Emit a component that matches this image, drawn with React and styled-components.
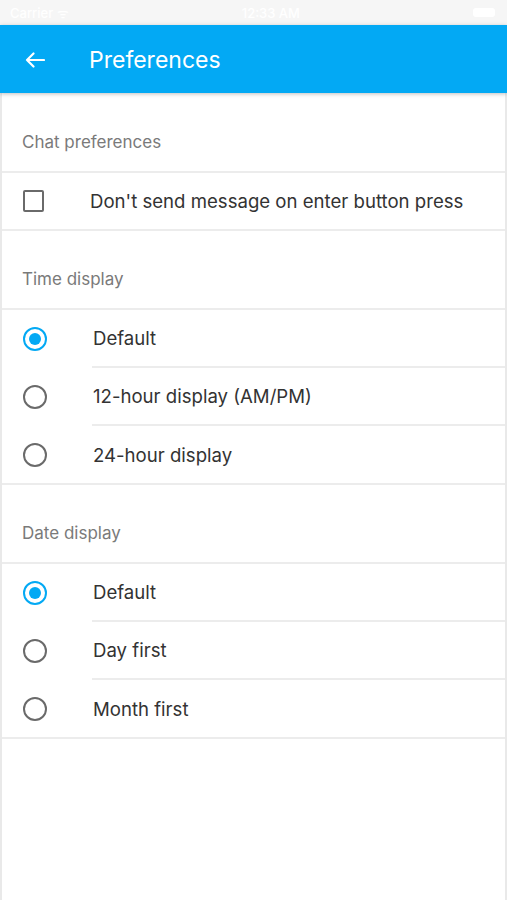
import styled, { createGlobalStyle } from "styled-components";

const GlobalStyle = createGlobalStyle`
  html, body {
    margin: 0;
    padding: 0;
    background: #ffffff;
  }
  body {
    font-family: Inter, Roboto, "Liberation Sans", sans-serif;
  }
`;

const Page = styled.div`
  width: 507px;
  min-height: 900px;
  display: flex;
  flex-direction: column;
  background: #ffffff;
`;

const StatusBar = styled.div`
  height: 25px;
  background: #f6f6f6;
  display: flex;
  align-items: center;
  justify-content: space-between;
  padding: 0 12px 0 10px;
  color: #ffffff;
  font-size: 13px;
  font-weight: 500;
`;

const Battery = styled.div`
  width: 22px;
  height: 9px;
  border-radius: 3px;
  background: #ffffff;
`;

const Header = styled.header`
  height: 68px;
  background: #03a9f4;
  display: flex;
  align-items: center;
  gap: 44px;
  padding: 2px 25px 0;
  box-sizing: border-box;
  box-shadow: 0 1px 4px rgba(0, 0, 0, 0.25);
  position: relative;
  z-index: 1;
`;

const Title = styled.h1`
  margin: 0;
  color: #ffffff;
  font-size: 23px;
  font-weight: 400;
`;

const Content = styled.main`
  flex: 1;
  border-left: 2px solid #e9e9e9;
  border-right: 2px solid #e9e9e9;
`;

const SectionHeader = styled.div`
  height: ${(p) => p.$height || 79}px;
  display: flex;
  align-items: flex-end;
  padding: 0 0 19px 20px;
  box-sizing: border-box;
  border-bottom: 2px solid #ececec;
  color: #7a7a7a;
  font-size: 17px;
`;

const Row = styled.label`
  height: ${(p) => p.$height || 58}px;
  display: flex;
  align-items: center;
  padding-left: 20px;
  box-sizing: border-box;
  border-bottom: ${(p) => (p.$last ? "2px solid #ececec" : "none")};
  color: #333333;
  font-size: 18.6px;
`;

const Control = styled.div`
  width: 70px;
  flex-shrink: 0;
  display: flex;
  align-items: center;
`;

const RowText = styled.div`
  flex: 1;
  height: 100%;
  display: flex;
  align-items: center;
  margin-left: ${(p) => p.$shift || 0}px;
  padding-left: ${(p) => p.$indent || 0}px;
  box-sizing: border-box;
  border-bottom: ${(p) => (p.$last ? "none" : "2px solid #ececec")};
`;

const Checkbox = styled.div`
  width: 17px;
  height: 18px;
  border: 2.5px solid #6a6a6a;
  border-radius: 2px;
  margin-left: 1px;
`;

const Radio = styled.div`
  width: 20px;
  height: 20px;
  border-radius: 50%;
  border: 2px solid ${(p) => (p.$checked ? "#03a9f4" : "#6a6a6a")};
  display: flex;
  align-items: center;
  justify-content: center;
  margin-left: 1px;
  &::after {
    content: "";
    width: 12px;
    height: 12px;
    border-radius: 50%;
    background: ${(p) => (p.$checked ? "#03a9f4" : "transparent")};
  }
`;

function BackArrow() {
  return (
    <svg width="20" height="16" viewBox="0 0 20 16" fill="none">
      <path
        d="M19 8H2M8.5 1.5L2 8l6.5 6.5"
        stroke="#ffffff"
        strokeWidth="2.2"
        strokeLinecap="round"
        strokeLinejoin="round"
      />
    </svg>
  );
}

function RadioGroup({ options, selected }) {
  return (
    <div>
      {options.map((label, i) => {
        const last = i === options.length - 1;
        return (
          <Row key={label} $last={last} $height={last ? 59 : 58}>
            <Control>
              <Radio $checked={i === selected} />
            </Control>
            <RowText $indent={1} $last={last}>
              {label}
            </RowText>
          </Row>
        );
      })}
    </div>
  );
}

export default function App() {
  return (
    <Page>
      <GlobalStyle />
      <StatusBar>
        <span>Carrier ᯤ</span>
        <span>12:33 AM</span>
        <Battery />
      </StatusBar>
      <Header>
        <BackArrow />
        <Title>Preferences</Title>
      </Header>
      <Content>
        <SectionHeader $height={80}>Chat preferences</SectionHeader>
        <Row $last>
          <Control>
            <Checkbox />
          </Control>
          <RowText $shift={-2} $last>
            Don't send message on enter button press
          </RowText>
        </Row>
        <SectionHeader>Time display</SectionHeader>
        <RadioGroup
          options={["Default", "12-hour display (AM/PM)", "24-hour display"]}
          selected={0}
        />
        <SectionHeader>Date display</SectionHeader>
        <RadioGroup options={["Default", "Day first", "Month first"]} selected={0} />
      </Content>
    </Page>
  );
}
